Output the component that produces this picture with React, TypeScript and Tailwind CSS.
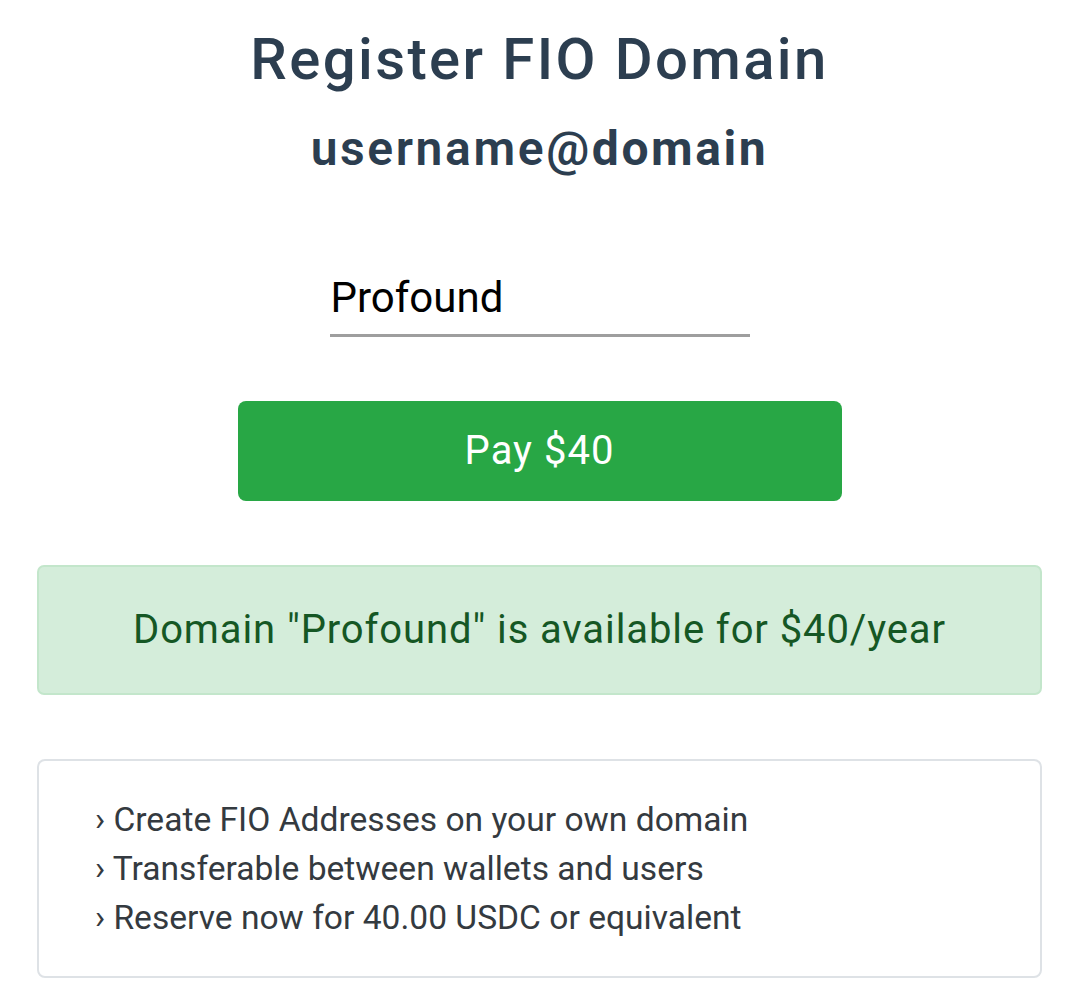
export default function App() {
  return (
    <div className="min-h-[1007px] bg-white font-['Roboto',sans-serif]">
      <div className="pl-[37px] pr-[38px] pt-[24px]">
        {/* Heading */}
        <h1 className="text-center text-[58px] leading-[70px] font-medium tracking-[2.4px] text-[#2c3e50]">
          Register FIO Domain
        </h1>
        <h2 className="mt-[26px] text-center text-[48px] leading-[58px] font-semibold tracking-[2.6px] text-[#2c3e50]">
          username@<span className="font-bold">domain</span>
        </h2>

        {/* Domain input */}
        <div className="mt-[95px] flex justify-center">
          <div className="w-[420px] border-b-[3px] border-[#9e9e9e] pl-[1px] pb-[11px]">
            <div className="text-[42px] leading-[50px] text-black">Profound</div>
          </div>
        </div>

        {/* Pay button */}
        <div className="mt-[64px] flex justify-center">
          <button className="h-[100px] w-[604px] rounded-[8px] bg-[#28a745] text-[40px] tracking-[1px] text-white">
            Pay $40
          </button>
        </div>

        {/* Availability alert */}
        <div className="mt-[64px] flex h-[130px] items-center justify-center rounded-[7px] border-2 border-[#c3e6cb] bg-[#d4edda] text-[40px] tracking-[0.9px] text-[#155724]">
          Domain "Profound" is available for $40/year
        </div>

        {/* Features */}
        <div className="mt-[64px] rounded-[8px] border-2 border-[#dee2e6] px-[56px] py-[34px]">
          <ul className="text-[33.6px] leading-[49px] text-[#343a40]">
            <li>› Create FIO Addresses on your own domain</li>
            <li>› Transferable between wallets and users</li>
            <li>› Reserve now for 40.00 USDC or equivalent</li>
          </ul>
        </div>
      </div>
    </div>
  );
}
